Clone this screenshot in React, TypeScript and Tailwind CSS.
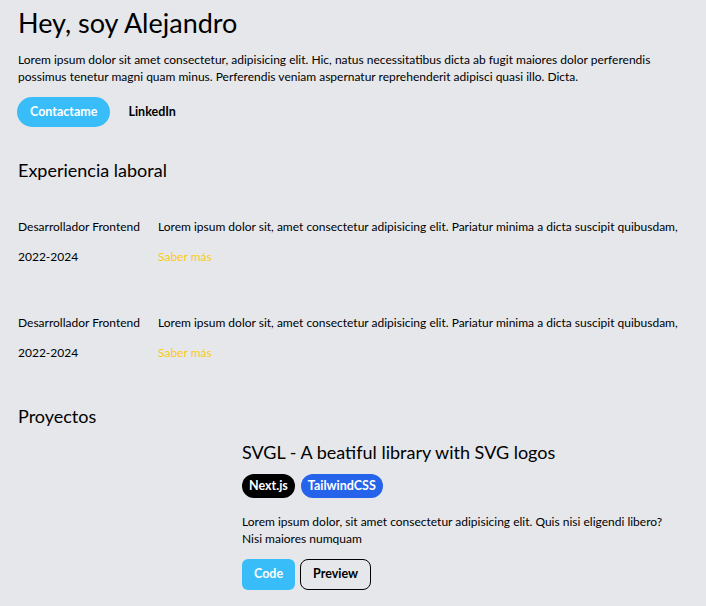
const experiencias = [
  {
    puesto: 'Desarrollador Frontend',
    fecha: '2022-2024',
    texto:
      'Lorem ipsum dolor sit, amet consectetur adipisicing elit. Pariatur minima a dicta suscipit quibusdam,'
  },
  {
    puesto: 'Desarrollador Frontend',
    fecha: '2022-2024',
    texto:
      'Lorem ipsum dolor sit, amet consectetur adipisicing elit. Pariatur minima a dicta suscipit quibusdam,'
  }
];

export default function App() {
  return (
    <div className="min-h-screen bg-[#e5e7eb] px-[18px] pt-[5px] font-['Lato',sans-serif] text-black">
      <section>
        <h1 className="text-[27px] leading-9">Hey, soy Alejandro</h1>
        <p className="mt-[10px] text-xs leading-[17px]">
          Lorem ipsum dolor sit amet consectetur, adipisicing elit. Hic, natus necessitatibus dicta ab fugit
          maiores dolor perferendis possimus tenetur magni quam minus. Perferendis veniam aspernatur reprehenderit
          adipisci quasi illo. Dicta.
        </p>
        <div className="mt-[12px] flex items-center gap-[18px]">
          <a className="-ml-px flex h-[30px] items-center rounded-full bg-[#38bdf8] px-[13px] text-[12.5px] font-bold text-white">
            Contactame
          </a>
          <a className="text-[12.5px] font-bold">LinkedIn</a>
        </div>
      </section>

      <section className="mt-[29px]">
        <h2 className="text-lg leading-7">Experiencia laboral</h2>
        <div className="mt-[28px] flex flex-col gap-[36px]">
          {experiencias.map((e, i) => (
            <div key={i} className="flex gap-[18px] text-xs leading-4">
              <div className="flex w-[122px] shrink-0 flex-col">
                <span className="whitespace-nowrap py-[7px]">{e.puesto}</span>
                <span className="py-[7px]">{e.fecha}</span>
              </div>
              <div className="flex min-w-0 flex-col">
                <span className="whitespace-nowrap py-[7px]">{e.texto}</span>
                <a className="py-[7px] text-[#facc15]">Saber más</a>
              </div>
            </div>
          ))}
        </div>
      </section>

      <section className="mt-[34px]">
        <h2 className="text-lg leading-7">Proyectos</h2>
        <div className="mt-[8px] grid grid-cols-[206px_1fr] gap-[18px]">
          <div></div>
          <div className="max-w-[440px]">
            <h3 className="text-lg leading-7">SVGL - A beatiful library with SVG logos</h3>
            <div className="mt-[8px] flex gap-[6px]">
              <span className="flex h-[24px] items-center rounded-full bg-black px-[7px] text-[12.5px] font-bold text-white">
                Next.js
              </span>
              <span className="flex h-[24px] items-center rounded-full bg-[#2563eb] px-[7px] text-[12.5px] font-bold text-white">
                TailwindCSS
              </span>
            </div>
            <p className="mt-[15px] text-xs leading-[17px]">
              Lorem ipsum dolor, sit amet consectetur adipisicing elit. Quis nisi eligendi libero? Nisi maiores
              numquam
            </p>
            <div className="mt-[12px] flex gap-[5px]">
              <a className="flex h-[31px] items-center rounded-md bg-[#38bdf8] px-[12px] text-[12.5px] font-bold text-white">
                Code
              </a>
              <a className="flex h-[31px] items-center rounded-lg border border-black px-[12px] text-[12.5px] font-bold">
                Preview
              </a>
            </div>
          </div>
        </div>
      </section>
    </div>
  );
}
